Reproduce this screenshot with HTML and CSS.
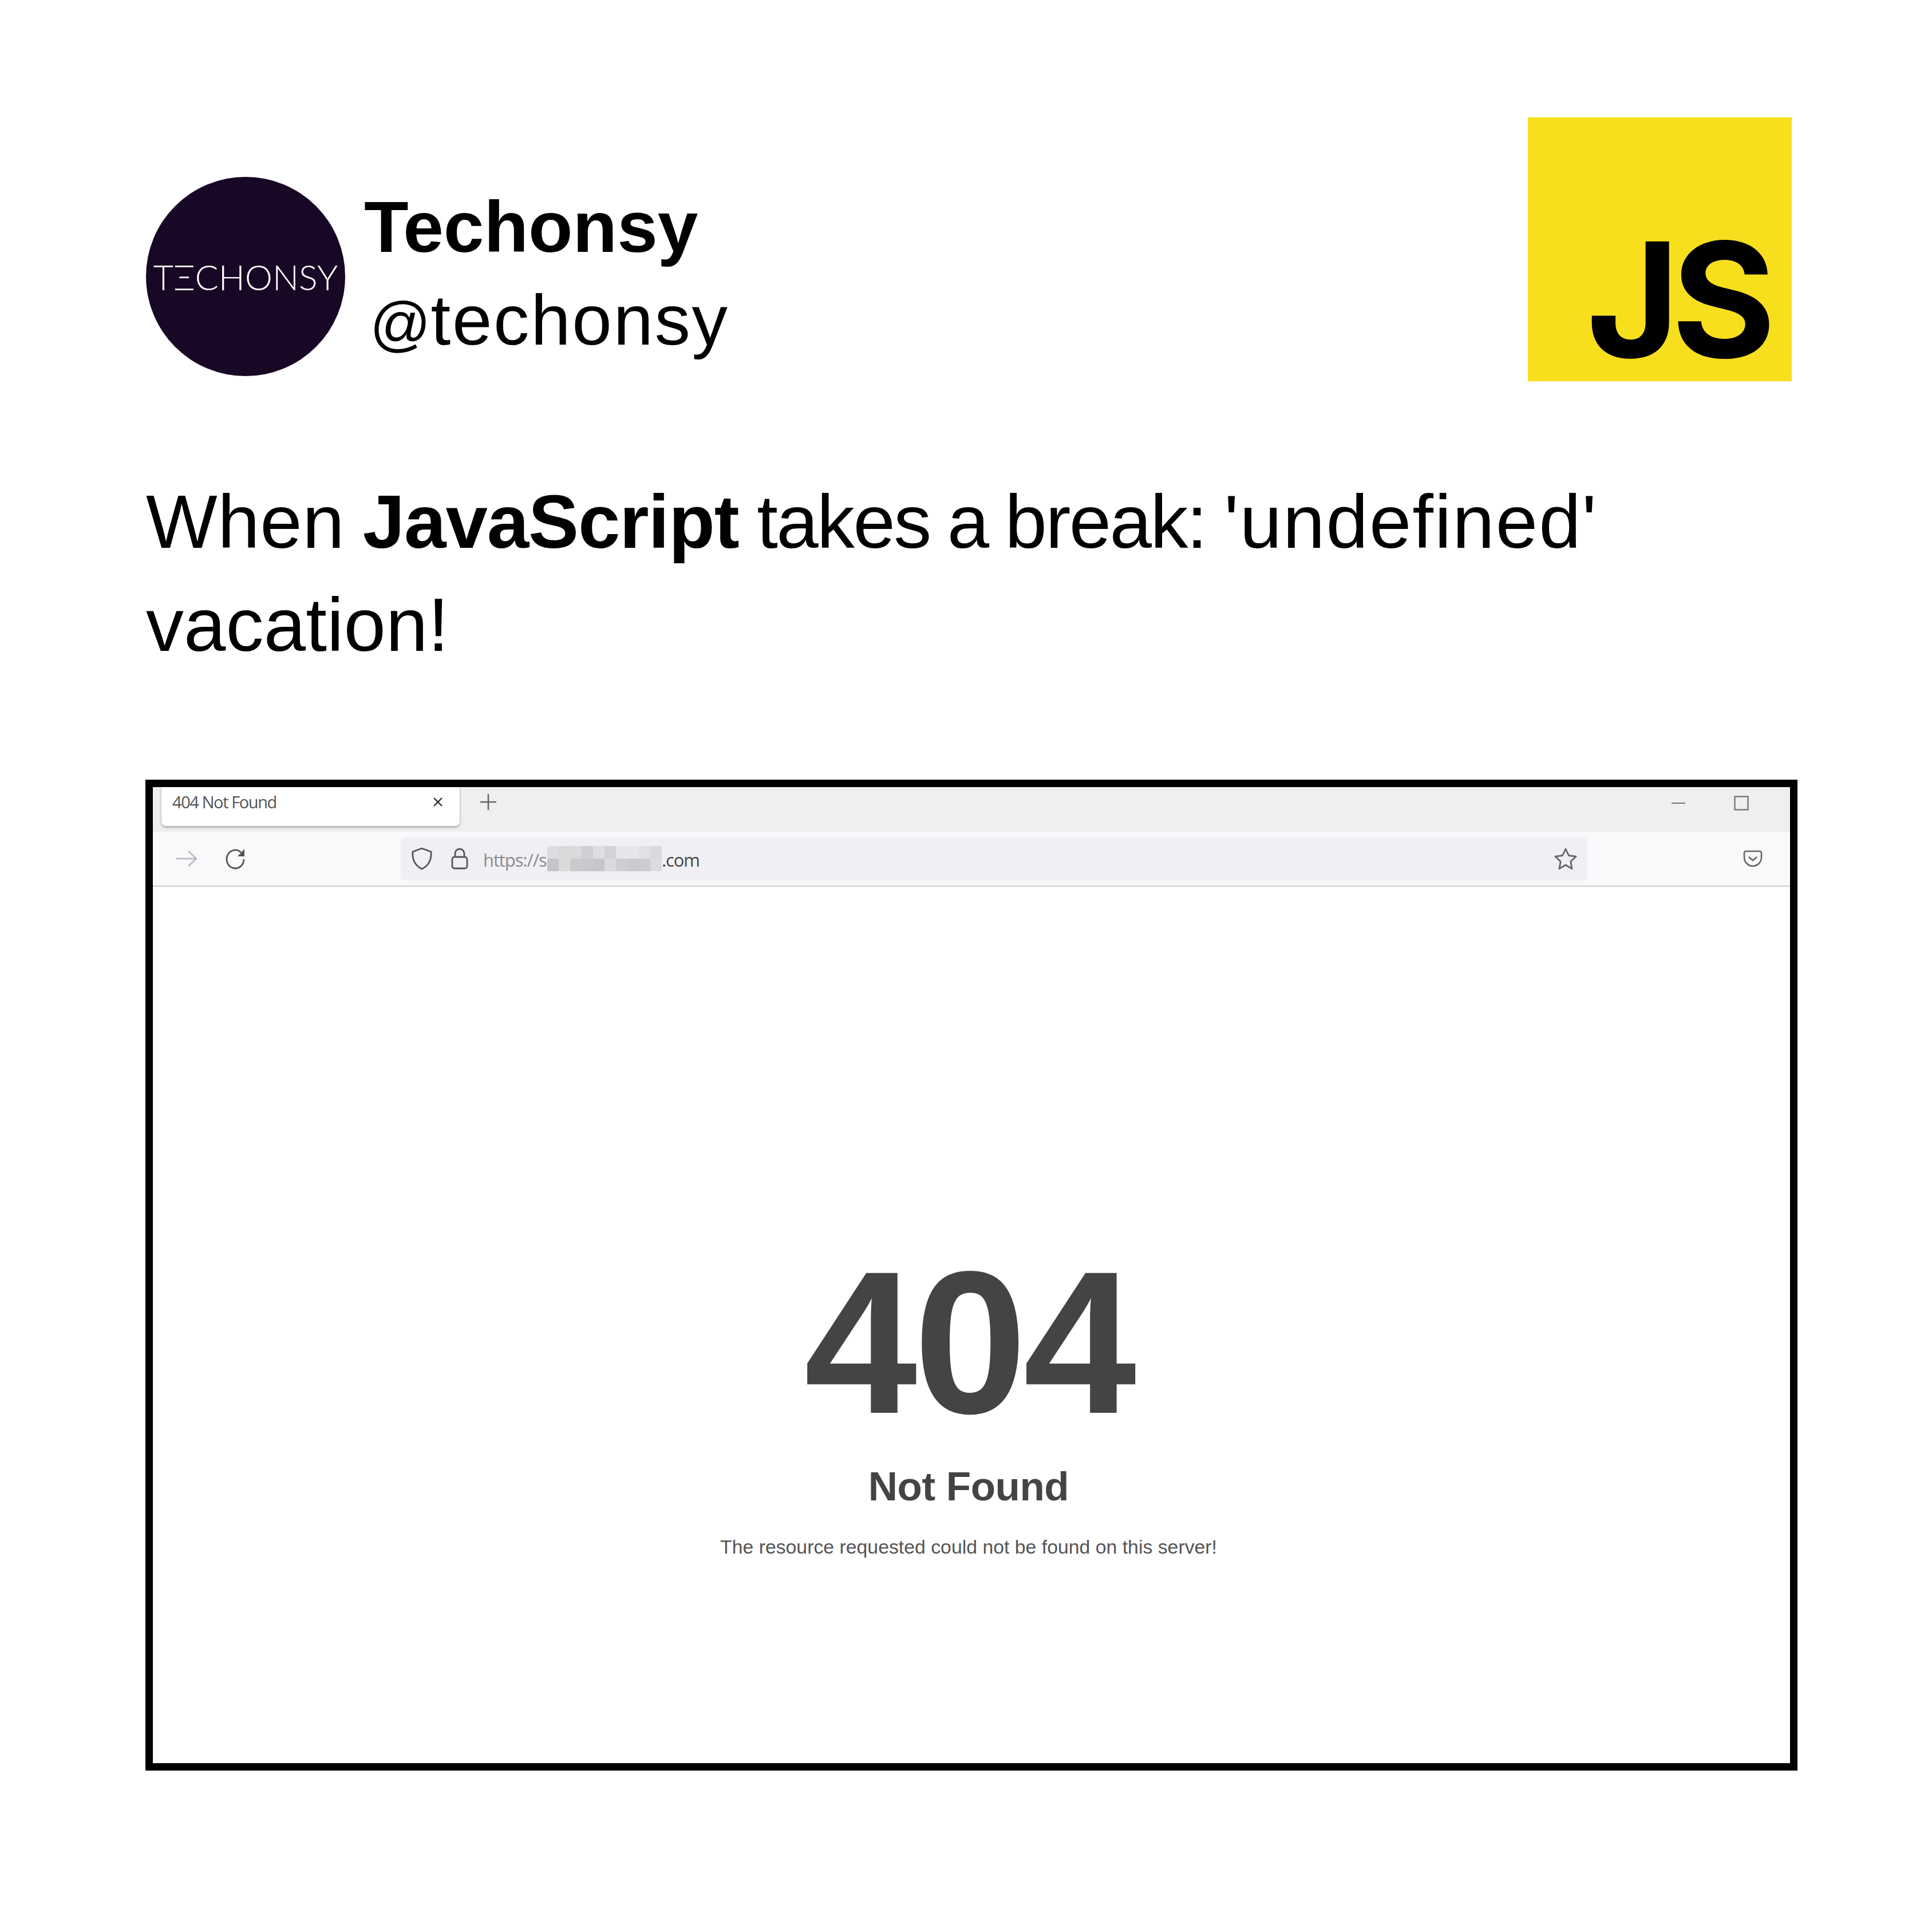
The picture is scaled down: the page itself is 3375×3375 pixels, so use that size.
FILE: index.html
```html
<!DOCTYPE html>
<html lang="en">
<head>
  <meta charset="UTF-8">
  <title>Techonsy</title>
  <link rel="stylesheet" href="styles.css">
</head>
<body>

  <div id="post">
    <div id="header">
      <div id="avatar"><span>TΞCHONSY</span></div>
      <div id="names">
        <div id="name">Techonsy</div>
        <div id="handle"><span class="at">@</span>techonsy</div>
      </div>
      <div id="jsLogo"><span>JS</span></div>
    </div>

    <p id="caption"><span class="wide">When</span> <b>JavaScript</b> <span class="tight">takes a break:</span> <span class="term">'undefined'</span> <span class="last">vacation!</span></p>

    <div id="shot">
      <div id="tabStrip">
        <div id="tab">
          <span>404 Not Found</span>
          <svg class="icon" width="24" height="24" viewBox="0 0 24 24"><path d="M5 5l14 14M19 5L5 19" stroke="#333" stroke-width="2.4" fill="none"/></svg>
        </div>
        <svg id="newTab" class="icon" width="32" height="32" viewBox="0 0 32 32"><path d="M16 2v28M2 16h28" stroke="#666" stroke-width="2.6" fill="none"/></svg>
        <div id="winButtons">
          <svg class="icon" width="26" height="4" viewBox="0 0 26 4"><path d="M1 2h24" stroke="#777" stroke-width="2"/></svg>
          <svg class="icon" width="26" height="26" viewBox="0 0 26 26"><rect x="1.5" y="1.5" width="23" height="23" stroke="#777" stroke-width="2.4" fill="none"/></svg>
        </div>
      </div>

      <div id="toolbar">
        <svg class="icon" id="forward" width="38" height="32" viewBox="0 0 38 32"><path d="M1 16h35M22 3l14 13-14 13" stroke="#b9b9bd" stroke-width="2.6" fill="none"/></svg>
        <svg class="icon" id="reload" width="38" height="38" viewBox="0 0 38 38"><path d="M33 20a15 16 0 1 1-5-12" stroke="#555" stroke-width="2.8" fill="none"/><path d="M34 2v13H22z" fill="#555"/></svg>
        <div id="urlBar">
          <svg class="icon" width="38" height="40" viewBox="0 0 38 40"><path d="M19 2l16 6c1 13-4 24-16 30C7 32 2 21 3 8z" stroke="#555" stroke-width="2.8" fill="none"/></svg>
          <svg class="icon" id="lock" width="30" height="38" viewBox="0 0 30 38"><rect x="2" y="16" width="26" height="20" rx="4" stroke="#555" stroke-width="2.8" fill="none"/><path d="M7 16V10a8 8 0 0 1 16 0v6" stroke="#555" stroke-width="2.8" fill="none"/></svg>
          <div id="url">
            <span id="urlScheme">https://s</span>
            <svg id="mosaic" width="200" height="44" viewBox="0 0 10 2" preserveAspectRatio="none">
              <rect width="1" height="1" x="0" y="0" fill="#dcdde0"/><rect width="1" height="1" x="1" y="0" fill="#d9d9dc"/><rect width="1" height="1" x="2" y="0" fill="#d9dad9"/><rect width="1" height="1" x="3" y="0" fill="#cfd0d4"/><rect width="1" height="1" x="4" y="0" fill="#dedee2"/><rect width="1" height="1" x="5" y="0" fill="#d3d3d7"/><rect width="1" height="1" x="6" y="0" fill="#e6e6ea"/><rect width="1" height="1" x="7" y="0" fill="#e6e6ea"/><rect width="1" height="1" x="8" y="0" fill="#e0e1e5"/><rect width="1" height="1" x="9" y="0" fill="#d9d9dd"/>
              <rect width="1" height="1" x="0" y="1" fill="#c5c5c9"/><rect width="1" height="1" x="1" y="1" fill="#d9dad9"/><rect width="1" height="1" x="2" y="1" fill="#c8cace"/><rect width="1" height="1" x="3" y="1" fill="#cbc8cc"/><rect width="1" height="1" x="4" y="1" fill="#c8c6ca"/><rect width="1" height="1" x="5" y="1" fill="#dadbde"/><rect width="1" height="1" x="6" y="1" fill="#cfcfd3"/><rect width="1" height="1" x="7" y="1" fill="#cbcacf"/><rect width="1" height="1" x="8" y="1" fill="#cdcccf"/><rect width="1" height="1" x="9" y="1" fill="#dcdce0"/>
            </svg>
            <span id="urlDomain">.com</span>
          </div>
          <svg class="icon" id="star" width="40" height="38" viewBox="0 0 40 38"><path d="M20 2l5.5 11.5 12.5 1.7-9.2 8.7 2.3 12.6L20 30l-11.1 6.5 2.3-12.6L2 15.2l12.5-1.7z" stroke="#666" stroke-width="2.8" stroke-linejoin="round" fill="none"/></svg>
        </div>
        <svg class="icon" id="pocket" width="34" height="30" viewBox="0 0 34 30"><path d="M5 2h24a3 3 0 0 1 3 3v8c0 8-7 15-15 15S2 21 2 13V5a3 3 0 0 1 3-3z" stroke="#666" stroke-width="2.6" fill="none"/><path d="M10 12l7 6 7-6" stroke="#666" stroke-width="2.6" fill="none"/></svg>
      </div>

      <div id="errorPage">
        <h1>404</h1>
        <h2>Not Found</h2>
        <p>The resource requested could not be found on this server!</p>
      </div>
    </div>
  </div>

</body>
</html>
```

FILE: styles.css
```css
body {
  font-family: "Liberation Sans", Arial, sans-serif;
  background-color: #fff;
  color: #000;
  margin: 0;
  padding: 0;
}

#post {
  width: 3375px;
  height: 3375px;
  box-sizing: border-box;
  padding: 205px 235px 0 254px;
}

#header {
  display: flex;
  align-items: flex-start;
}

#avatar {
  width: 348px;
  height: 348px;
  margin-top: 104px;
  margin-left: 1px;
  border-radius: 50%;
  background-color: #190825;
  color: #fff;
  display: flex;
  align-items: center;
  justify-content: center;
  font-family: "Lato", sans-serif;
  font-weight: 300;
  font-size: 61px;
  white-space: nowrap;
}

#names {
  margin-left: 33px;
  margin-top: 119px;
  flex: 1;
}

#name {
  font-size: 127px;
  font-weight: 700;
  line-height: 144px;
}

#handle {
  font-size: 125px;
  line-height: 160px;
  margin-top: 11px;
  margin-left: 10px;
  letter-spacing: 2.6px;
}

#handle .at {
  font-size: 105px;
  letter-spacing: 0;
}

#jsLogo {
  width: 461px;
  height: 461px;
  margin-right: 10px;
  background-color: #f7df1e;
  display: flex;
  align-items: flex-end;
  justify-content: flex-end;
  font-family: "Inter", sans-serif;
  font-weight: 700;
  font-size: 278px;
  line-height: 1;
  letter-spacing: -14px;
}

#jsLogo span {
  margin-right: 42px;
  margin-bottom: 4px;
}

#caption {
  margin: 156px 0 0 1px;
  width: 2800px;
  font-size: 132px;
  line-height: 180px;
  letter-spacing: -1.1px;
  word-spacing: -4px;
}

#caption .wide {
  letter-spacing: 0.6px;
}

#caption .tight {
  letter-spacing: -2.6px;
}

#caption .term {
  letter-spacing: 2px;
}

#caption .last {
  letter-spacing: 0.1px;
}

#shot {
  width: 2886px;
  height: 1731px;
  margin-top: 180px;
  box-sizing: border-box;
  border: 13px solid #000;
  display: flex;
  flex-direction: column;
}

#tabStrip {
  height: 78px;
  background-color: #efefef;
  display: flex;
  align-items: flex-start;
  padding-left: 15px;
  flex-shrink: 0;
}

#tab {
  width: 521px;
  height: 68px;
  box-sizing: border-box;
  background-color: #fff;
  border-radius: 0 0 8px 8px;
  box-shadow: 0 2px 4px rgba(0, 0, 0, 0.35);
  padding: 6px 26px 0 19px;
  display: flex;
  justify-content: space-between;
  font-family: "Open Sans", sans-serif;
  font-size: 29px;
  line-height: 40px;
  letter-spacing: -1.4px;
  color: #555;
}

#tab .icon {
  margin-top: 8px;
}

#newTab {
  margin: 10px 0 0 34px;
}

#winButtons {
  margin-left: auto;
  margin-right: 72px;
  display: flex;
  align-items: center;
  gap: 84px;
  height: 56px;
}

#toolbar {
  height: 94px;
  background-color: #f9f9fb;
  border-bottom: 2px solid #ccc;
  display: flex;
  align-items: center;
  flex-shrink: 0;
}

#forward {
  margin-left: 40px;
}

#reload {
  margin-left: 48px;
}

#urlBar {
  width: 2073px;
  height: 75px;
  margin-left: 269px;
  box-sizing: border-box;
  padding: 0 18px 0 18px;
  background-color: #f0f0f4;
  border-radius: 8px;
  display: flex;
  align-items: center;
}

#lock {
  margin-left: 32px;
}

#url {
  margin-left: 26px;
  display: flex;
  align-items: center;
  flex: 1;
  font-family: "Open Sans", sans-serif;
  font-size: 31px;
  letter-spacing: -1.1px;
}

#urlScheme {
  color: #8a8a90;
  width: 112px;
  white-space: nowrap;
  padding-top: 3px;
}

#urlDomain {
  color: #444;
  padding-top: 3px;
}

#pocket {
  margin-left: 272px;
}

#errorPage {
  flex: 1;
  display: flex;
  flex-direction: column;
  align-items: center;
  color: #444;
  padding: 592px 10px 0 0;
}

#errorPage h1 {
  margin: 0;
  font-size: 355px;
  line-height: 408px;
  letter-spacing: -6px;
}

#errorPage h2 {
  margin: 7px 0 0 0;
  font-size: 71px;
  line-height: 82px;
  letter-spacing: -0.5px;
}

#errorPage p {
  margin: 43px 0 0 0;
  font-size: 33.8px;
  line-height: 42px;
  color: #555;
}
```
